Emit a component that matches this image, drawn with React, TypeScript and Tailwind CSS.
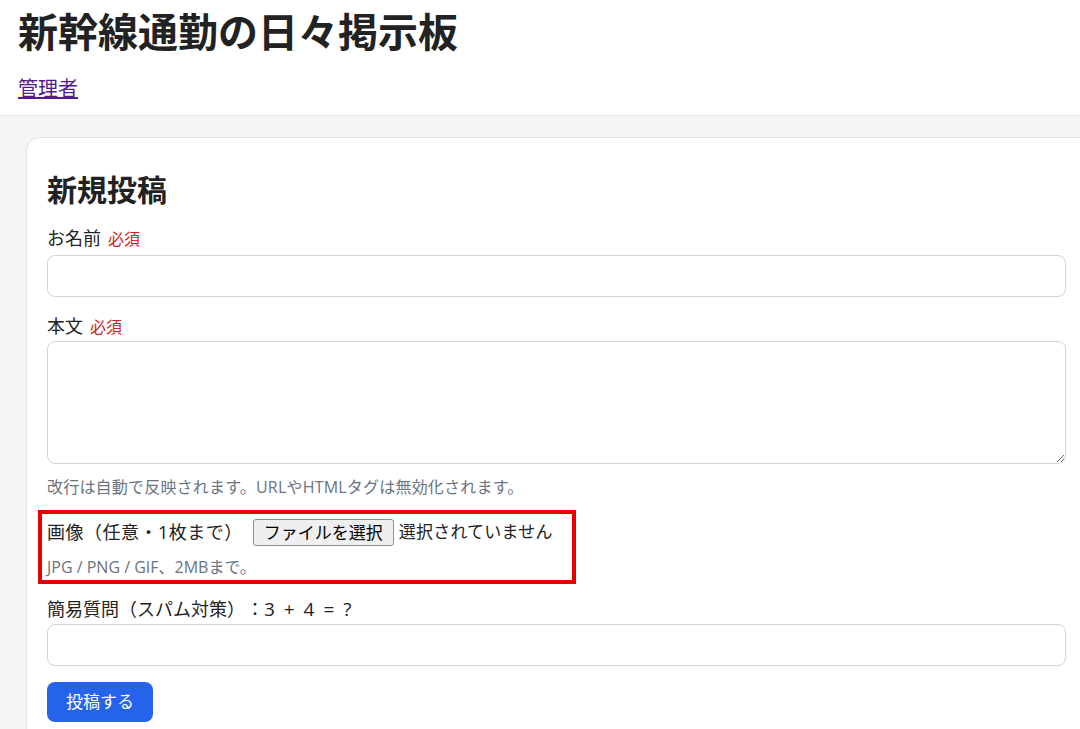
import { useState } from "react";

const jp = "font-['Open_Sans','Noto_Sans_CJK_JP','Noto_Sans',sans-serif]";

function Label({ text, required, children }: { text: string; required?: boolean; children?: React.ReactNode }) {
  return (
    <label className="block text-[18px] leading-[26px] text-[#222]">
      {text}
      {children}
      {required && <span className="ml-[7px] text-[16px] text-[#c62828]">必須</span>}
    </label>
  );
}

export default function App() {
  const [name, setName] = useState("");
  const [body, setBody] = useState("");
  const [answer, setAnswer] = useState("");

  return (
    <div className={`min-h-screen overflow-hidden bg-[#f3f4f6] ${jp}`}>
      <header className="bg-white border-b border-[#e5e7eb] px-[18px] pt-[7px] pb-[12px]">
        <h1 className="text-[40px] font-bold leading-[50px] text-[#222]">新幹線通勤の日々掲示板</h1>
        <a href="#" className="mt-[18px] inline-block text-[20px] leading-[28px] text-[#551a8b] underline">
          管理者
        </a>
      </header>

      <main className="pt-[21px] pl-[26px]">
        <form
          onSubmit={(e) => e.preventDefault()}
          className="w-[1080px] rounded-[14px] border border-[#e2e4e8] bg-white px-[20px] pt-[32px] pb-[40px]"
        >
          <h2 className="text-[30px] font-bold leading-[40px] text-[#222]">新規投稿</h2>

          <div className="mt-[15px] w-[1019px]">
            <Label text="お名前" required />
            <input
              value={name}
              onChange={(e) => setName(e.target.value)}
              className="mt-[3px] block h-[42px] w-full rounded-[8px] border border-[#d1d5db] px-3 outline-none"
            />

            <div className="mt-[16px]">
              <Label text="本文" required />
              <textarea
                value={body}
                onChange={(e) => setBody(e.target.value)}
                className="mt-[1px] block h-[123px] w-full rounded-[8px] border border-[#d1d5db] px-3 py-2 outline-none"
              />
              <p className="mt-[11px] text-[16px] leading-[24px] tracking-[0.2px] text-[#6b7280]">
                改行は自動で反映されます。URLやHTMLタグは無効化されます。
              </p>
            </div>

            <div className="relative mt-[19px]">
              <div className="flex items-center text-[18px] leading-[28px] text-[#222]">
                <span className="tracking-[0.5px]">画像（任意・1枚まで）</span>
                <span className="ml-[10px] rounded-[3px] border border-[#8f8f8f] bg-[#efefef] px-[10px] text-[17px] leading-[25px] text-black">
                  ファイルを選択
                </span>
                <span className="ml-[5px] text-[17px] tracking-[0.2px]">選択されていません</span>
              </div>
              <p className="mt-[10px] text-[16px] leading-[22px] text-[#6b7280]">JPG / PNG / GIF、2MBまで。</p>
              <div className="pointer-events-none absolute left-[-9px] top-[-8px] bottom-[-6px] w-[538px] border-[4px] border-[#e80000]" />
            </div>

            <div className="mt-[18px]">
              <Label text="簡易質問（スパム対策）">
                <span className="ml-[10px]">：</span>
                <span className="text-[19px] tracking-[2px]">3 + 4 = ?</span>
              </Label>
              <input
                value={answer}
                onChange={(e) => setAnswer(e.target.value)}
                className="mt-[2px] block h-[42px] w-full rounded-[8px] border border-[#d1d5db] px-3 outline-none"
              />
            </div>

            <button
              type="submit"
              className="mt-[16px] h-[40px] rounded-[8px] bg-[#2563eb] px-[19px] text-[17px] text-white"
            >
              投稿する
            </button>
          </div>
        </form>
      </main>
    </div>
  );
}
